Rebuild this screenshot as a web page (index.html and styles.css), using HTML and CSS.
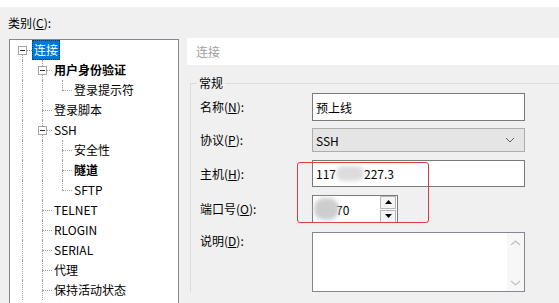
FILE: index.html
```html
<!DOCTYPE html>
<html lang="zh-CN">
<head>
    <meta charset="UTF-8">
    <meta name="viewport" content="width=device-width, initial-scale=1.0">
    <title>会话属性</title>
    <link rel="stylesheet" href="styles.css">
</head>
<body>
    <div class="top-band"></div>
    <div class="dialog">
        <div class="category">
            <div class="category-label">类别(<u>C</u>):</div>
            <div class="tree">
                <div class="node"><span class="cell root"><i class="box"></i></span><span class="name selected">连接</span></div>
                <div class="node"><span class="cell v"></span><span class="cell t"><i class="box"></i></span><span class="name bold">用户身份验证</span></div>
                <div class="node"><span class="cell v"></span><span class="cell v"></span><span class="cell l"></span><span class="name">登录提示符</span></div>
                <div class="node"><span class="cell v"></span><span class="cell t"></span><span class="name">登录脚本</span></div>
                <div class="node"><span class="cell v"></span><span class="cell t"><i class="box"></i></span><span class="name">SSH</span></div>
                <div class="node"><span class="cell v"></span><span class="cell v"></span><span class="cell t"></span><span class="name">安全性</span></div>
                <div class="node"><span class="cell v"></span><span class="cell v"></span><span class="cell t"></span><span class="name bold">隧道</span></div>
                <div class="node"><span class="cell v"></span><span class="cell v"></span><span class="cell l"></span><span class="name">SFTP</span></div>
                <div class="node"><span class="cell v"></span><span class="cell t"></span><span class="name">TELNET</span></div>
                <div class="node"><span class="cell v"></span><span class="cell t"></span><span class="name">RLOGIN</span></div>
                <div class="node"><span class="cell v"></span><span class="cell t"></span><span class="name">SERIAL</span></div>
                <div class="node"><span class="cell v"></span><span class="cell t"></span><span class="name">代理</span></div>
                <div class="node"><span class="cell v"></span><span class="cell t"></span><span class="name">保持活动状态</span></div>
            </div>
        </div>

        <div class="panel">
            <div class="panel-title">连接</div>
            <fieldset class="group">
                <legend>常规</legend>
                <div class="row row-name">
                    <label>名称(<u>N</u>):</label>
                    <div class="field">预上线</div>
                </div>
                <div class="row row-proto">
                    <label>协议(<u>P</u>):</label>
                    <div class="select">
                        <span>SSH</span>
                        <svg width="10" height="6" viewBox="0 0 10 6"><polyline points="1,1 5,5 9,1" fill="none" stroke="#606060" stroke-width="1"/></svg>
                    </div>
                </div>
                <div class="row row-host">
                    <label>主机(<u>H</u>):</label>
                    <div class="field">117<span class="smudge host-smudge"></span>227.3</div>
                </div>
                <div class="row row-port">
                    <label>端口号(<u>O</u>):</label>
                    <div class="field port">
                        <span class="smudge port-smudge"></span><span class="port-value">70</span>
                        <div class="spin">
                            <span class="spin-btn"><svg width="7" height="4" viewBox="0 0 7 4"><polygon points="3.5,0 7,4 0,4" fill="#000"/></svg></span>
                            <span class="spin-btn"><svg width="7" height="4" viewBox="0 0 7 4"><polygon points="0,0 7,0 3.5,4" fill="#000"/></svg></span>
                        </div>
                    </div>
                </div>
                <div class="row row-desc">
                    <label>说明(<u>D</u>):</label>
                    <div class="memo">
                        <div class="memo-bar">
                            <svg width="11" height="6" viewBox="0 0 11 6"><polyline points="1,5 5.5,1 10,5" fill="none" stroke="#c2c2c2" stroke-width="1.2"/></svg>
                            <svg width="11" height="6" viewBox="0 0 11 6"><polyline points="1,1 5.5,5 10,1" fill="none" stroke="#c2c2c2" stroke-width="1.2"/></svg>
                        </div>
                    </div>
                </div>
            </fieldset>
        </div>
    </div>
    <div class="mark"></div>
</body>
</html>
```

FILE: styles.css
```css
body {
    margin: 0;
    width: 559px;
    height: 303px;
    overflow: hidden;
    background: #f0f0f0;
    color: #000;
    font-family: "Noto Sans CJK SC", "Microsoft YaHei", sans-serif;
    font-size: 12px;
    position: relative;
}

u {
    text-decoration: underline;
    text-underline-offset: 1px;
}

.top-band {
    height: 7px;
    background: #fff;
}

.dialog {
    display: flex;
    padding-left: 8px;
}

/* left: category tree */
.category {
    width: 171px;
    flex: none;
}

.category-label {
    height: 32px;
    line-height: 16px;
    padding-top: 8px;
    box-sizing: border-box;
}

.tree {
    margin-left: 1px;
    height: 264px;
    box-sizing: border-box;
    border: 1px solid #828790;
    border-bottom: none;
    background: #fff;
    padding-left: 2px;
}

.node {
    display: flex;
    height: 20px;
    align-items: center;
}

.cell {
    position: relative;
    width: 20px;
    height: 20px;
    flex: none;
}

.cell.v::before,
.cell.t::before {
    content: "";
    position: absolute;
    left: 10px;
    top: 0;
    bottom: 0;
    border-left: 1px dotted #a0a0a0;
}

.cell.l::before {
    content: "";
    position: absolute;
    left: 10px;
    top: 0;
    height: 10px;
    border-left: 1px dotted #a0a0a0;
}

.cell.root::before {
    content: "";
    position: absolute;
    left: 10px;
    top: 10px;
    bottom: 0;
    border-left: 1px dotted #a0a0a0;
}

.cell.t::after,
.cell.l::after,
.cell.root::after {
    content: "";
    position: absolute;
    left: 10px;
    right: 0;
    top: 10px;
    border-top: 1px dotted #a0a0a0;
}

.box {
    position: absolute;
    left: 6px;
    top: 6px;
    width: 7px;
    height: 7px;
    border: 1px solid #a6a6a6;
    background: #fff;
    z-index: 1;
}

.box::after {
    content: "";
    position: absolute;
    left: 1px;
    top: 3px;
    width: 5px;
    height: 1px;
    background: #333;
}

.name {
    height: 20px;
    line-height: 20px;
    padding: 0 2px;
    white-space: nowrap;
}

.name.bold {
    font-weight: bold;
}

.name.selected {
    background: #0078d7;
    color: #fff;
    outline: 1px dotted #333;
    outline-offset: -1px;
}

/* right: properties panel */
.panel {
    flex: 1;
    margin-left: 8px;
    padding-top: 31px;
}

.panel-title {
    height: 27px;
    line-height: 27px;
    padding-left: 9px;
    background: #fff;
    color: #a0a0a0;
}

.group {
    margin: 10px -20px 0 3px;
    padding: 0 0 0 9px;
    border: 1px solid #dcdcdc;
    border-bottom: none;
    min-width: 0;
}

.group legend {
    margin-left: -3px;
    padding: 0 2px;
    line-height: 16px;
}

.row {
    display: flex;
    align-items: center;
}

.row label {
    width: 112px;
    flex: none;
    line-height: 16px;
}

.row-name {
    margin-top: 2px;
}

.row-proto {
    margin-top: 7px;
}

.row-host {
    margin-top: 8px;
}

.row-port {
    margin-top: 8px;
}

.row-desc {
    margin-top: 9px;
    align-items: flex-start;
}

.row-desc label {
    padding-top: 1px;
}

.field {
    width: 213px;
    height: 28px;
    box-sizing: border-box;
    border: 1px solid #7a7a7a;
    background: #fff;
    padding-left: 3px;
    display: flex;
    align-items: center;
    white-space: nowrap;
}

.row-host .field {
    height: 27px;
}

.select {
    width: 213px;
    height: 24px;
    box-sizing: border-box;
    border: 1px solid #adadad;
    background: #e5e5e5;
    padding: 0 9px 0 3px;
    display: flex;
    align-items: center;
    justify-content: space-between;
}

.smudge {
    display: inline-block;
    background: #d4d4d4;
    border-radius: 8px;
    filter: blur(2px);
}

.host-smudge {
    width: 28px;
    height: 15px;
    background: #dcdcdc;
}

.field.port {
    width: 86px;
    padding-left: 1px;
    padding-right: 1px;
}

/* the blur covers part of the first digit, so it is lifted over the value */
.port-smudge {
    position: relative;
    z-index: 1;
    width: 25px;
    height: 22px;
    margin-right: -3px;
    background: #cdcdcd;
    border-radius: 10px;
}

.port-value {
    flex: 1;
}

.spin {
    display: flex;
    flex-direction: column;
    gap: 1px;
}

.spin-btn {
    width: 14px;
    height: 11px;
    border: 1px solid #b5b5b5;
    background: #f4f4f4;
    display: flex;
    align-items: center;
    justify-content: center;
}

.memo {
    width: 213px;
    height: 60px;
    box-sizing: border-box;
    border: 1px solid #828790;
    background: #fff;
    display: flex;
    justify-content: flex-end;
}

.memo-bar {
    width: 17px;
    background: #f7f7f7;
    display: flex;
    flex-direction: column;
    justify-content: space-between;
    align-items: center;
    padding: 7px 0 5px;
}

/* red annotation drawn over the host/port fields */
.mark {
    position: absolute;
    left: 297px;
    top: 162px;
    width: 130px;
    height: 59px;
    border: 1.5px solid #dc3c44;
    border-radius: 3px;
}
```
